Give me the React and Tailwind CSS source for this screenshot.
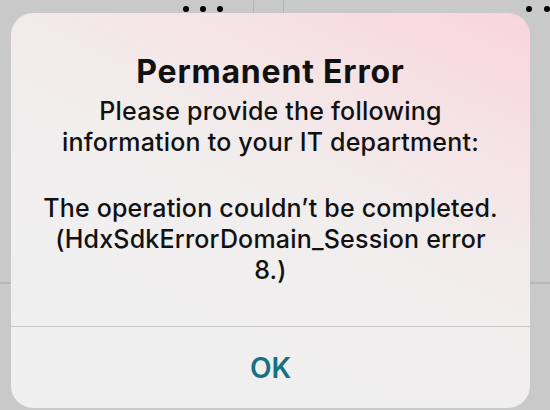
export default function App() {
    return (
        <div className="relative w-[550px] h-[410px] overflow-hidden bg-[#c9c9c9]" style={{ fontFamily: 'Inter, "Noto Sans", sans-serif' }}>
            {/* background app, mostly hidden behind the alert */}
            <div className="flex h-[13px]">
                <div className="w-[254px] flex items-start pt-[6px] pl-[183px] gap-[11px]">
                    <span className="w-[6px] h-[6px] rounded-full bg-black" />
                    <span className="w-[6px] h-[6px] rounded-full bg-black" />
                    <span className="w-[6px] h-[6px] rounded-full bg-black" />
                </div>
                <div className="w-[32px] border-l border-r border-[#b4b4b4]" />
                <div className="flex-1 flex items-start pt-[6px] pl-[242px] gap-[12px]">
                    <span className="w-[6px] h-[6px] rounded-full bg-black shrink-0" />
                    <span className="w-[6px] h-[6px] rounded-full bg-black shrink-0" />
                </div>
            </div>
            <div className="h-[269px]" />
            <div className="h-[2px] bg-[#b8b8b8]" />

            <div className="absolute left-[11px] top-[13px] w-[519px] h-[395px] rounded-[22px] flex flex-col bg-[linear-gradient(205deg,#f9d5dc_0%,#f5e4e6_25%,#f1eeee_48%,#f0f0f0_100%)]">
                <div className="flex-1 flex flex-col items-center text-center text-[#111]">
                    <h1 className="pt-[40px] text-[32px] leading-[38px] font-bold tracking-[0.8px]">Permanent Error</h1>
                    <p className="mt-[5px] text-[25px] leading-[31px] font-medium tracking-[0.2px]">
                        Please provide the following<br />information to your IT department:
                    </p>
                    <p className="mt-[35px] text-[25px] leading-[31px] font-medium tracking-[0.2px]">
                        The operation couldn’t be completed.<br />(HdxSdkErrorDomain_Session error<br />8.)
                    </p>
                </div>
                <div className="h-[82px] border-t border-[#c6c6c6] flex items-center justify-center">
                    <span className="text-[28px] font-semibold text-[#17717f]">OK</span>
                </div>
            </div>
        </div>
    );
}
